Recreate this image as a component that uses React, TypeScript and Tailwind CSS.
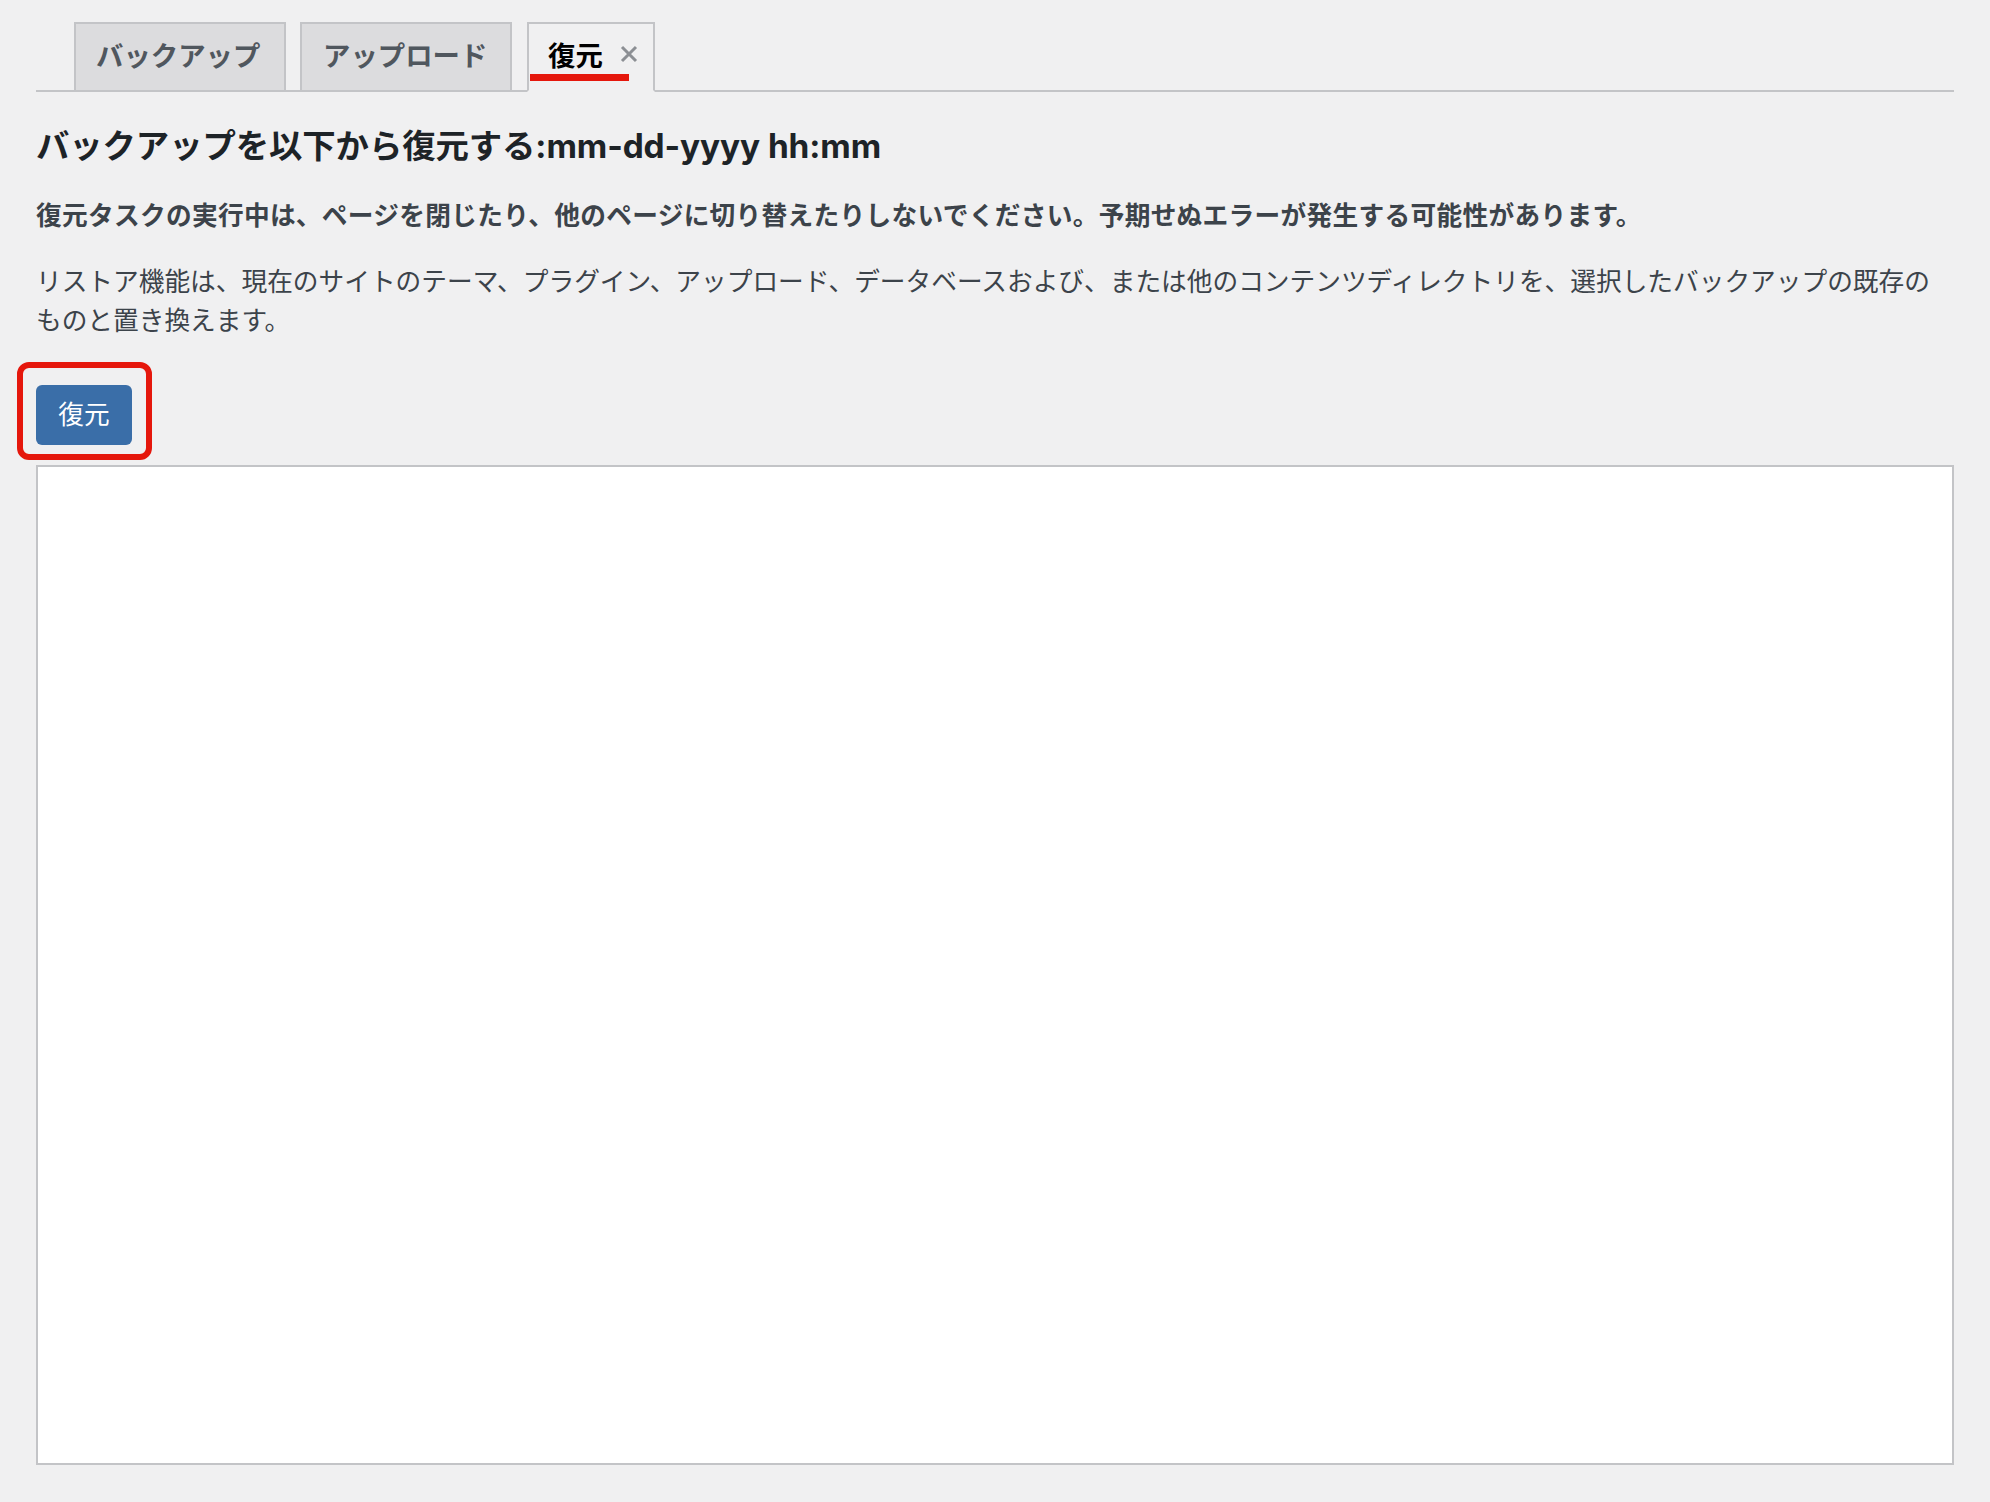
import React from "react";

export default function App() {
  return (
    <div className="min-h-[1502px] bg-[#f0f0f1] px-[36px] pt-[22px] font-['Inter','Noto_Sans_CJK_JP',sans-serif] text-[#3c434a]">
      {/* Tabs */}
      <div className="flex items-end border-b-2 border-[#c3c4c7] pl-[38px]">
        <div className="-mb-[2px] flex h-[70px] w-[212px] items-center border-2 border-[#c3c4c7] bg-[#dcdcde] pl-[20px] text-[27.4px] font-bold text-[#50575e]">
          バックアップ
        </div>
        <div className="-mb-[2px] ml-[14px] flex h-[70px] w-[212px] items-center border-2 border-[#c3c4c7] bg-[#dcdcde] pl-[21px] text-[27.4px] font-bold text-[#50575e]">
          アップロード
        </div>
        <div className="relative -mb-[2px] ml-[15px] flex h-[70px] w-[128px] items-center border-2 border-b-[#f0f0f1] border-[#c3c4c7] bg-[#f0f0f1] pl-[19px] text-[27.4px] font-bold text-black">
          <span>復元</span>
          <svg
            className="ml-[17px] -mt-[6px]"
            width="18"
            height="18"
            viewBox="0 0 18 18"
          >
            <path
              d="M2 2 L16 16 M16 2 L2 16"
              stroke="#8c8f94"
              strokeWidth="3"
              strokeLinecap="butt"
            />
          </svg>
          <div className="absolute left-[1px] top-[50px] h-[7px] w-[99px] bg-[#e5170c]" />
        </div>
      </div>

      {/* Heading */}
      <h2 className="mt-[31px] text-[33.4px] font-bold leading-[47px] tracking-[-0.1px] text-[#1d2327]">
        バックアップを以下から復元する:mm-dd-yyyy hh:mm
      </h2>

      <p className="mt-[27px] text-[25.7px] font-bold leading-[38px] tracking-[0.3px] text-[#3c434a]">
        復元タスクの実行中は、ページを閉じたり、他のページに切り替えたりしないでください。予期せぬエラーが発生する可能性があります。
      </p>

      <p className="mt-[27px] w-[1910px] text-[25.7px] leading-[39px] text-[#3c434a]">
        リストア機能は、現在のサイトのテーマ、プラグイン、アップロード、データベースおよび、または他のコンテンツディレクトリを、選択したバックアップの既存のものと置き換えます。
      </p>

      {/* Button with annotation */}
      <div className="mt-[45px] flex">
        <div className="relative">
          <button className="flex h-[60px] w-[96px] items-center justify-center rounded-[6px] bg-[#3a6ea8] text-[25.7px] text-white">
            復元
          </button>
          <div className="absolute -bottom-[15px] -left-[19px] -right-[20px] -top-[23px] rounded-[12px] border-[6px] border-[#e5170c]" />
        </div>
      </div>

      {/* Log box */}
      <div className="mt-[20px] h-[1000px] w-[1918px] border-2 border-[#c3c4c7] bg-white" />
    </div>
  );
}
